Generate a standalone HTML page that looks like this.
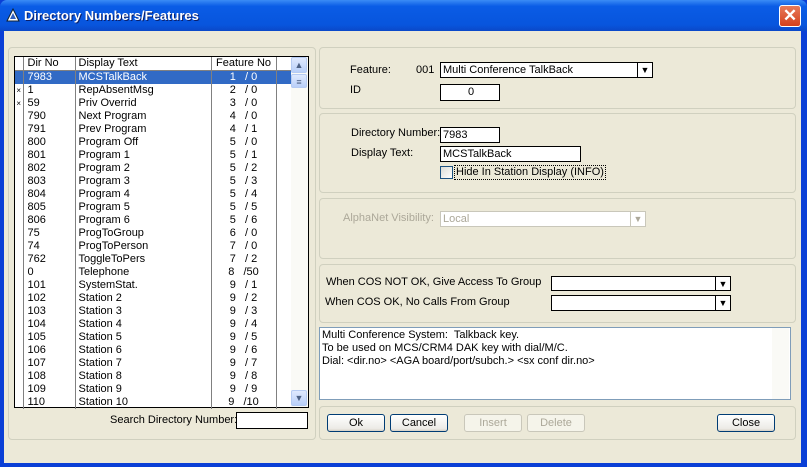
<!DOCTYPE html>
<html><head><style>
*{box-sizing:border-box;margin:0;padding:0}
body{width:807px;height:467px;overflow:hidden;background:#0a3fd6;font:11px "Liberation Sans",sans-serif;color:#000;position:relative}
.a{position:absolute}
#title{left:0;top:0;width:807px;height:31px;background:linear-gradient(#3b8cf5,#0a5ce6 20%,#0855dd 80%,#0a48c8);border-radius:7px 7px 0 0}
#title span{position:absolute;left:24px;top:8px;color:#fff;font-weight:bold;font-size:13px;text-shadow:1px 1px #0a1f6a}
#client{left:4px;top:31px;width:797px;height:432px;background:#ece9d8}
.g{position:absolute;border:1px solid #d0d0bf;border-radius:4px}
.box{position:absolute;background:#fff;border:1px solid #000;padding-left:2px;line-height:14px;white-space:nowrap}
.cb .ar{position:absolute;right:0;top:0;bottom:0;width:15px;border-left:1px solid #000;font-size:9px;text-align:center;line-height:14px}
.btn{position:absolute;height:18px;width:58px;border:1px solid #003c74;border-radius:3px;background:linear-gradient(#fff,#ecebe6 85%,#d6d0c5);text-align:center;line-height:16px}
.dis{border-color:#c9c7ba;color:#aca899;background:#f5f4ea}
table{border-collapse:collapse;position:absolute;left:15px;top:57px;width:276px;table-layout:fixed}
td{height:13px;line-height:13px;padding:0;white-space:nowrap;overflow:hidden}
td.m{width:8px;font-size:8px;text-align:center;border-right:1px solid #808080}
td.d{width:52px;padding-left:4px;border-right:1px solid #808080}
td.t{width:136px;padding-left:3px;border-right:1px solid #808080}
td.f{width:65px;text-align:center;border-right:1px solid #808080}
td.x{width:15px}
tr.h td{border-bottom:1px solid #808080}
tr.s td{background:#316ac5;color:#fff}
.sb{position:absolute;width:16px;height:16px;border-radius:2px;background:linear-gradient(#dfe9fe,#b9cff9);border:1px solid #b6cbf3;color:#4d6185;text-align:center;font-size:9px;line-height:14px}
</style></head><body>
<div id="title" class="a"><svg class="a" style="left:6px;top:8px" width="14" height="14"><polygon points="7,1 13,13 1,13" fill="#fff" stroke="#123" /><polygon points="7,5 10,11 4,11" fill="#3060c0"/></svg><span>Directory Numbers/Features</span>
<div class="a" style="left:779px;top:5px;width:22px;height:22px;border:1px solid #fff;border-radius:3px;background:linear-gradient(#e87a5a,#d4401c);color:#fff;font-weight:bold;font-size:17px;text-align:center;line-height:20px">✕</div></div>
<div id="client" class="a"></div>
<div class="g" style="left:8px;top:47px;width:308px;height:393px"></div>
<div class="a" style="left:14px;top:56px;width:295px;height:352px;background:#fff;border:1px solid #000"></div>
<table>
<tr class="h"><td class="m"></td><td class="d">Dir No</td><td class="t">Display Text</td><td class="f">Feature No</td><td class="x"></td></tr>
<tr class="s"><td class="m"></td><td class="d">7983</td><td class="t">MCSTalkBack</td><td class="f">1 &nbsp; / 0</td><td class="x"></td></tr>
<tr><td class="m">×</td><td class="d">1</td><td class="t">RepAbsentMsg</td><td class="f">2 &nbsp; / 0</td><td></td></tr>
<tr><td class="m">×</td><td class="d">59</td><td class="t">Priv Overrid</td><td class="f">3 &nbsp; / 0</td><td></td></tr>
<tr><td class="m"></td><td class="d">790</td><td class="t">Next Program</td><td class="f">4 &nbsp; / 0</td><td></td></tr>
<tr><td class="m"></td><td class="d">791</td><td class="t">Prev Program</td><td class="f">4 &nbsp; / 1</td><td></td></tr>
<tr><td class="m"></td><td class="d">800</td><td class="t">Program Off</td><td class="f">5 &nbsp; / 0</td><td></td></tr>
<tr><td class="m"></td><td class="d">801</td><td class="t">Program 1</td><td class="f">5 &nbsp; / 1</td><td></td></tr>
<tr><td class="m"></td><td class="d">802</td><td class="t">Program 2</td><td class="f">5 &nbsp; / 2</td><td></td></tr>
<tr><td class="m"></td><td class="d">803</td><td class="t">Program 3</td><td class="f">5 &nbsp; / 3</td><td></td></tr>
<tr><td class="m"></td><td class="d">804</td><td class="t">Program 4</td><td class="f">5 &nbsp; / 4</td><td></td></tr>
<tr><td class="m"></td><td class="d">805</td><td class="t">Program 5</td><td class="f">5 &nbsp; / 5</td><td></td></tr>
<tr><td class="m"></td><td class="d">806</td><td class="t">Program 6</td><td class="f">5 &nbsp; / 6</td><td></td></tr>
<tr><td class="m"></td><td class="d">75</td><td class="t">ProgToGroup</td><td class="f">6 &nbsp; / 0</td><td></td></tr>
<tr><td class="m"></td><td class="d">74</td><td class="t">ProgToPerson</td><td class="f">7 &nbsp; / 0</td><td></td></tr>
<tr><td class="m"></td><td class="d">762</td><td class="t">ToggleToPers</td><td class="f">7 &nbsp; / 2</td><td></td></tr>
<tr><td class="m"></td><td class="d">0</td><td class="t">Telephone</td><td class="f">8 &nbsp; /50</td><td></td></tr>
<tr><td class="m"></td><td class="d">101</td><td class="t">SystemStat.</td><td class="f">9 &nbsp; / 1</td><td></td></tr>
<tr><td class="m"></td><td class="d">102</td><td class="t">Station 2</td><td class="f">9 &nbsp; / 2</td><td></td></tr>
<tr><td class="m"></td><td class="d">103</td><td class="t">Station 3</td><td class="f">9 &nbsp; / 3</td><td></td></tr>
<tr><td class="m"></td><td class="d">104</td><td class="t">Station 4</td><td class="f">9 &nbsp; / 4</td><td></td></tr>
<tr><td class="m"></td><td class="d">105</td><td class="t">Station 5</td><td class="f">9 &nbsp; / 5</td><td></td></tr>
<tr><td class="m"></td><td class="d">106</td><td class="t">Station 6</td><td class="f">9 &nbsp; / 6</td><td></td></tr>
<tr><td class="m"></td><td class="d">107</td><td class="t">Station 7</td><td class="f">9 &nbsp; / 7</td><td></td></tr>
<tr><td class="m"></td><td class="d">108</td><td class="t">Station 8</td><td class="f">9 &nbsp; / 8</td><td></td></tr>
<tr><td class="m"></td><td class="d">109</td><td class="t">Station 9</td><td class="f">9 &nbsp; / 9</td><td></td></tr>
<tr><td class="m"></td><td class="d">110</td><td class="t">Station 10</td><td class="f">9 &nbsp; /10</td><td></td></tr>
</table>
<div class="a" style="left:291px;top:57px;width:17px;height:350px;background:#fafaf6"></div>
<div class="sb" style="left:291px;top:57px">▲</div>
<div class="sb" style="left:291px;top:74px;height:14px">≡</div>
<div class="sb" style="left:291px;top:390px">▼</div>
<div class="a" style="left:110px;top:414px">Search Directory Number:</div>
<div class="box" style="left:236px;top:412px;width:72px;height:17px"></div>

<div class="g" style="left:319px;top:47px;width:477px;height:62px"></div>
<div class="a" style="left:350px;top:64px">Feature:</div>
<div class="a" style="left:416px;top:64px">001</div>
<div class="box cb" style="left:440px;top:62px;width:213px;height:16px">Multi Conference TalkBack<div class="ar">▼</div></div>
<div class="a" style="left:350px;top:84px">ID</div>
<div class="box" style="left:440px;top:84px;width:60px;height:17px;text-align:center">0</div>

<div class="g" style="left:319px;top:113px;width:477px;height:80px"></div>
<div class="a" style="left:351px;top:127px">Directory Number:</div>
<div class="box" style="left:440px;top:127px;width:60px;height:16px">7983</div>
<div class="a" style="left:351px;top:147px">Display Text:</div>
<div class="box" style="left:440px;top:146px;width:141px;height:16px">MCSTalkBack</div>
<div class="a" style="left:440px;top:166px;width:13px;height:13px;border:1px solid #1c5180;background:linear-gradient(135deg,#dcdcd6,#fff)"></div>
<div class="a" style="left:454px;top:165px;border:1px dotted #000;padding:0 1px;line-height:13px">Hide In Station Display (INFO)</div>

<div class="g" style="left:319px;top:198px;width:477px;height:61px"></div>
<div class="a" style="left:343px;top:212px;color:#aca899">AlphaNet Visibility:</div>
<div class="box cb" style="left:440px;top:211px;width:206px;height:16px;border-color:#c9c7ba;color:#aca899">Local<div class="ar" style="border-color:#c9c7ba;color:#aca899">▼</div></div>

<div class="g" style="left:319px;top:264px;width:477px;height:59px"></div>
<div class="a" style="left:326px;top:276px">When COS NOT OK, Give Access To Group</div>
<div class="box cb" style="left:551px;top:276px;width:180px;height:15px"><div class="ar">▼</div></div>
<div class="a" style="left:325px;top:296px">When COS OK, No Calls From Group</div>
<div class="box cb" style="left:551px;top:295px;width:180px;height:16px"><div class="ar">▼</div></div>

<div class="a" style="left:319px;top:327px;width:472px;height:73px;background:#fff;border:1px solid #7f9db9;padding:1px 2px;line-height:13px">Multi Conference System:&nbsp; Talkback key.<br>To be used on MCS/CRM4 DAK key with dial/M/C.<br>Dial: &lt;dir.no&gt; &lt;AGA board/port/subch.&gt; &lt;sx conf dir.no&gt;</div>
<div class="a" style="left:772px;top:328px;width:17px;height:71px;background:#fafaf6"></div>

<div class="g" style="left:319px;top:406px;width:477px;height:34px"></div>
<div class="btn" style="left:327px;top:414px">Ok</div>
<div class="btn" style="left:390px;top:414px">Cancel</div>
<div class="btn dis" style="left:464px;top:414px">Insert</div>
<div class="btn dis" style="left:527px;top:414px">Delete</div>
<div class="btn" style="left:717px;top:414px">Close</div>
</body></html>
